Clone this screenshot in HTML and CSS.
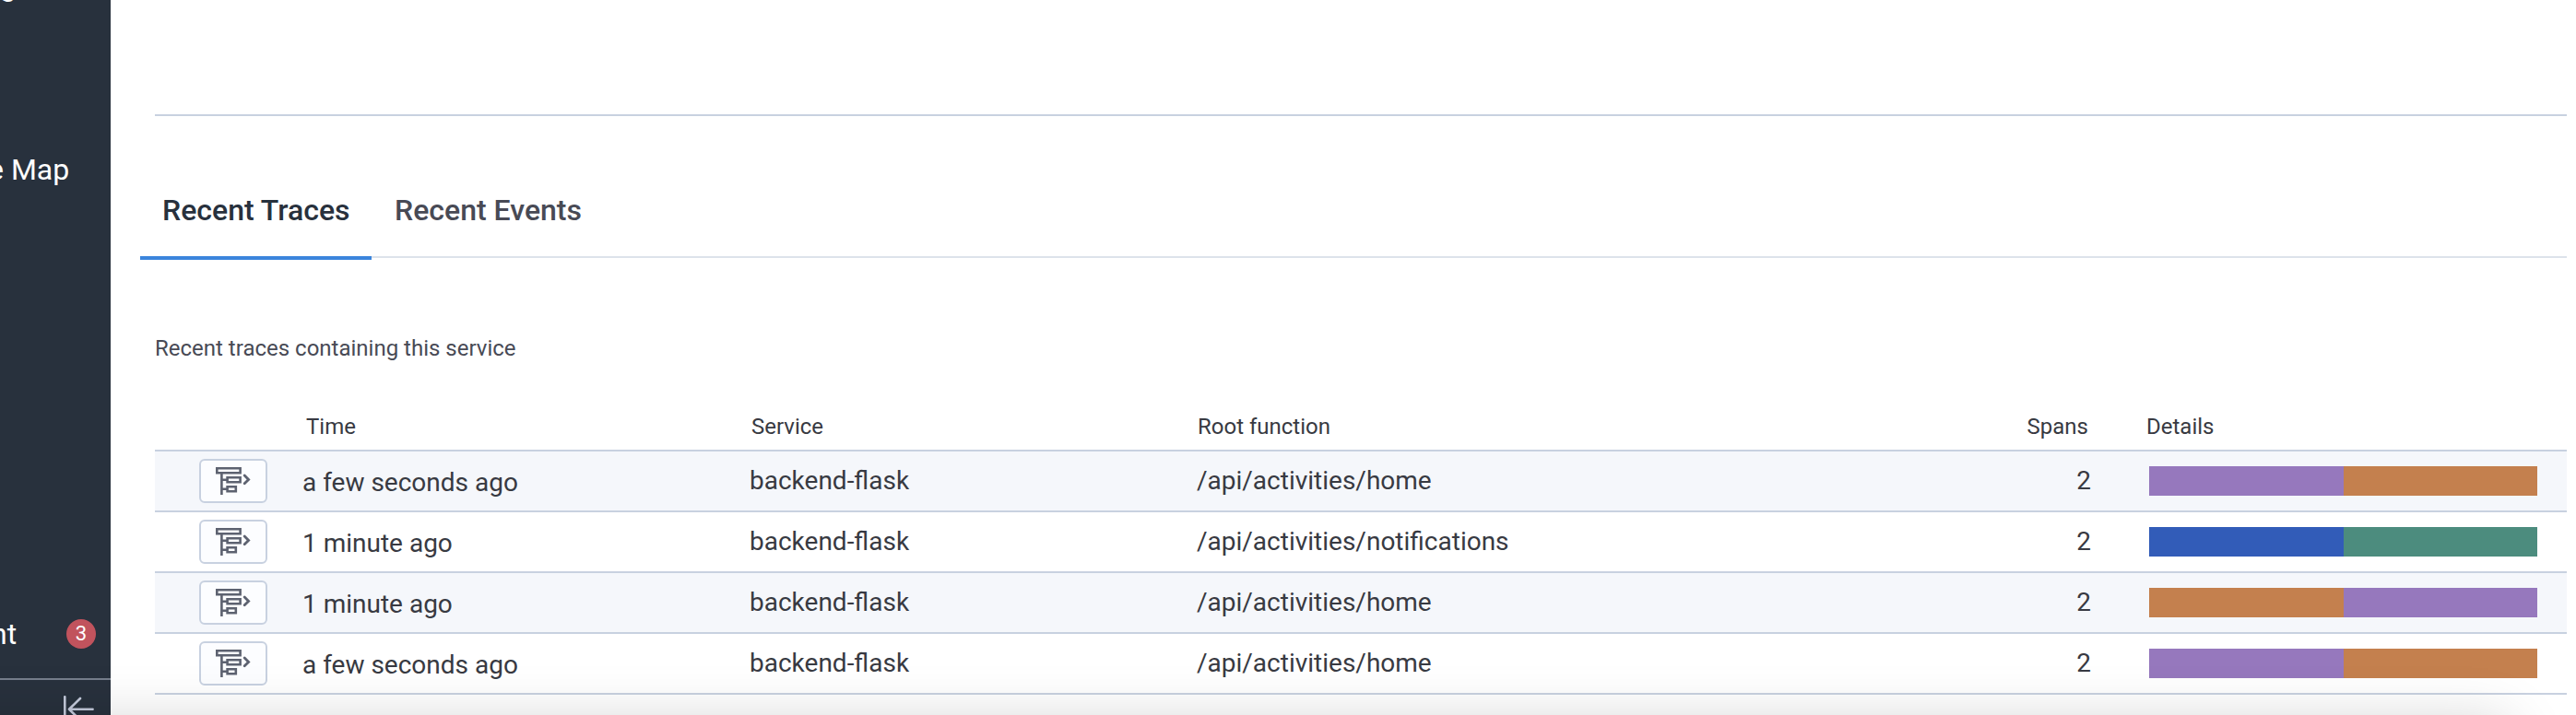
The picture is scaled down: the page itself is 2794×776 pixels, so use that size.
FILE: index.html
```html
<!DOCTYPE html>
<html lang="en">
<head>
<meta charset="utf-8">
<title>Recent Traces</title>
<link rel="stylesheet" href="styles.css">
</head>
<body>
<svg class="defs" width="0" height="0">
  <symbol id="trace" viewBox="0 0 38 30">
    <g fill="none" stroke="currentColor" stroke-width="2.6">
      <path d="M1.3 1.3H26.6V6.2H1.3Z"/>
      <path d="M6.4 6.5V30M6.4 13.7H12.4M6.4 23.7H12.4"/>
      <path d="M12.6 11.2H26.6V16.2H12.6Z"/>
      <path d="M12.6 21.2H21.8V26.2H12.6Z"/>
      <path d="M31.2 9L35.6 13.4L31.2 17.8" stroke-width="2.8" stroke-linecap="round"/>
    </g>
  </symbol>
</svg>
<div class="app">
  <aside class="sidebar">
    <div class="nav-item nav-first">g</div>
    <div class="nav-item nav-map">e Map</div>
    <div class="nav-item nav-account"><span>nt</span><span class="badge">3</span></div>
    <div class="collapse">
      <svg width="34" height="30" viewBox="0 0 34 30" fill="none" stroke="#c4cadb" stroke-width="2.6" stroke-linecap="round" stroke-linejoin="round">
        <path d="M2.3 1.2V29M7 14.8H32.6M19 3L7 14.8L19 26.6"/>
      </svg>
    </div>
  </aside>
  <main class="main">
    <div class="divider"></div>
    <nav class="tabs">
      <div class="tab active"><span>Recent Traces</span></div>
      <div class="tab"><span>Recent Events</span></div>
    </nav>
    <p class="caption"><span>Recent traces containing this service</span></p>
    <section class="table">
      <div class="row head">
        <span></span><span class="h-time">Time</span><span class="h-service">Service</span><span class="h-root">Root function</span><span class="num">Spans</span><span class="h-details">Details</span>
      </div>
      <div class="row odd">
        <span class="btn"><svg width="38" height="30"><use href="#trace"/></svg></span>
        <span class="time">a few seconds ago</span><span class="cell">backend-flask</span><span class="cell">/api/activities/home</span><span class="cell num">2</span>
        <span class="bar"><i class="purple"></i><i class="orange"></i></span>
      </div>
      <div class="row">
        <span class="btn"><svg width="38" height="30"><use href="#trace"/></svg></span>
        <span class="time">1 minute ago</span><span class="cell">backend-flask</span><span class="cell">/api/activities/notifications</span><span class="cell num">2</span>
        <span class="bar"><i class="blue"></i><i class="green"></i></span>
      </div>
      <div class="row odd">
        <span class="btn"><svg width="38" height="30"><use href="#trace"/></svg></span>
        <span class="time">1 minute ago</span><span class="cell">backend-flask</span><span class="cell">/api/activities/home</span><span class="cell num">2</span>
        <span class="bar"><i class="orange"></i><i class="purple"></i></span>
      </div>
      <div class="row">
        <span class="btn"><svg width="38" height="30"><use href="#trace"/></svg></span>
        <span class="time">a few seconds ago</span><span class="cell">backend-flask</span><span class="cell">/api/activities/home</span><span class="cell num">2</span>
        <span class="bar"><i class="purple"></i><i class="orange"></i></span>
      </div>
    </section>
  </main>
  <div class="shade"></div>
</div>
</body>
</html>
```
FILE: styles.css
```css
* { box-sizing: border-box; }
body {
  margin: 0;
  background: #fff;
  color: #383a42;
  font-family: Roboto, "Liberation Sans", sans-serif;
  font-size: 28px;
}
.defs { display: block; position: absolute; }
.app {
  position: relative;
  display: flex;
  height: 776px;
  overflow: hidden;
}
.sidebar {
  flex: none;
  display: flex;
  flex-direction: column;
  width: 120px;
  background: #28313d;
  color: #fff;
  font-size: 32px;
  overflow: hidden;
}
.nav-item { flex: none; height: 40px; line-height: 40px; white-space: nowrap; }
.nav-first { margin-top: -35px; }
.nav-map { margin-top: 159px; margin-left: -13px; }
.nav-account {
  display: flex;
  align-items: center;
  justify-content: space-between;
  margin: 464px 16px 0 -10px;
}
.badge {
  width: 32px;
  height: 32px;
  border-radius: 50%;
  background: #c1535d;
  font-size: 22px;
  line-height: 32px;
  text-align: center;
}
.collapse {
  flex: none;
  margin-top: 28px;
  padding: 17px 0 0 68px;
  height: 50px;
  border-top: 2px solid #767e8c;
}
.main { flex: 1; min-width: 0; padding: 124px 10px 0 48px; }
.divider { height: 2px; background: #c8d1e0; }
.tabs {
  display: flex;
  height: 104px;
  margin: 52px 0 0 -16px;
  background: linear-gradient(#dde3eb, #dde3eb) 0 100px / 100% 2px no-repeat;
  font-size: 32px;
  font-weight: 500;
  color: #484a55;
}
.tab { flex: none; width: 251px; padding: 0 24px; line-height: 100px; white-space: nowrap; }
.tab.active { color: #28313d; border-bottom: 4px solid #3b85dc; }
.tab:not(.active) { padding-left: 25px; }
.caption { margin: 78px 0 0; font-size: 24px; line-height: 36px; color: #484a55; }
.table { margin-top: 42px; }
.row {
  display: grid;
  grid-template-columns: 112px 485px 485px 835px 198px 421px;
  align-items: center;
  height: 66px;
  padding-left: 48px;
  border-bottom: 2px solid #c8d1e0;
  white-space: nowrap;
}
.head { height: 52px; font-size: 24px; }
.h-time { padding-left: 4px; }
.h-service { padding-left: 2px; }
.h-root { padding-left: 1px; }
.h-details { margin-left: -3px; }
.odd { background: #f5f7fb; }
.time { padding-top: 2px; }
.cell { padding-bottom: 2px; }
.btn {
  display: flex;
  width: 74px;
  height: 48px;
  padding: 7px 0 0 16px;
  border: 2px solid #c8d1e0;
  border-radius: 6px;
  background: #fcfdff;
  color: #5d6270;
}
.num { text-align: right; padding-right: 63px; }
.head .num { padding-right: 66px; }
.bar { display: flex; height: 32px; }
.bar i { flex: 1; }
.purple { background: #9678bd; }
.orange { background: #c4804e; }
.blue { background: #325cb8; }
.green { background: #4c8c7e; }
.shade {
  position: absolute;
  left: -100px;
  top: 786px;
  width: 2820px;
  height: 200px;
  box-shadow: 0 0 60px rgba(0, 0, 0, .19);
}
```
